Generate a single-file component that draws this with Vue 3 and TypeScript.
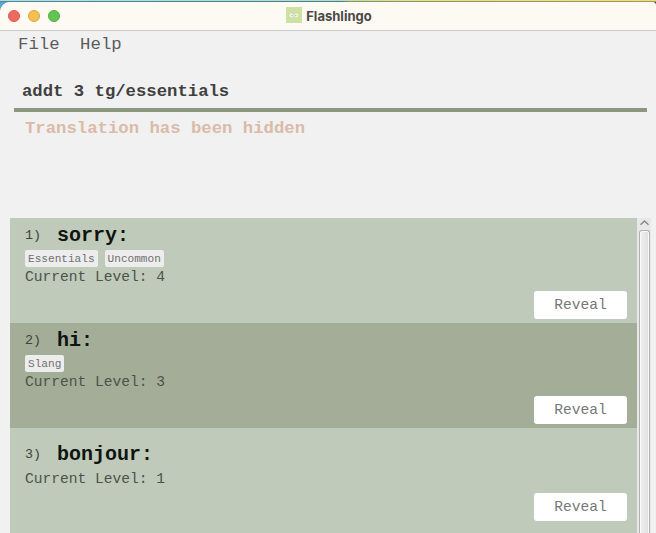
<script setup lang="ts">
interface Flashcard {
  index: number
  word: string
  tags: string[]
  level: number
}

const menus: string[] = ['File', 'Help']
const cards: Flashcard[] = [
  { index: 1, word: 'sorry', tags: ['Essentials', 'Uncommon'], level: 4 },
  { index: 2, word: 'hi', tags: ['Slang'], level: 3 },
  { index: 3, word: 'bonjour', tags: [], level: 1 },
]
</script>

<template>
  <div class="desktop">
    <div class="window">
      <header class="titlebar">
        <div class="lights">
          <span class="light close"></span>
          <span class="light minimise"></span>
          <span class="light maximise"></span>
        </div>
        <div class="title">
          <svg class="logo" width="16" height="16" viewBox="0 0 16 16">
            <rect width="16" height="16" fill="#cbe2a3" />
            <ellipse cx="5.5" cy="8.4" rx="2" ry="1.9" fill="#f3f1ee" />
            <ellipse cx="10.3" cy="8.4" rx="2" ry="1.9" fill="#f3f1ee" />
            <circle cx="6.1" cy="8.5" r="0.7" fill="#b9adb5" />
            <circle cx="9.8" cy="8.5" r="0.7" fill="#b9adb5" />
          </svg>
          <span>Flashlingo</span>
        </div>
      </header>

      <nav class="menubar">
        <span v-for="menu in menus" :key="menu">{{ menu }}</span>
      </nav>

      <div class="command">addt 3 tg/essentials</div>
      <div class="result">Translation has been hidden</div>

      <div class="list">
        <div class="cards">
          <article v-for="card in cards" :key="card.index" class="card" :class="{ untagged: !card.tags.length }">
            <div class="heading">
              <span class="index">{{ card.index }})</span>
              <span class="word">{{ card.word }}:</span>
            </div>
            <div v-if="card.tags.length" class="tags">
              <span v-for="tag in card.tags" :key="tag" class="tag">{{ tag }}</span>
            </div>
            <div class="level">Current Level: {{ card.level }}</div>
            <button class="reveal" type="button">Reveal</button>
          </article>
        </div>
        <div class="scrollbar">
          <svg class="arrow" width="13" height="12" viewBox="0 0 13 12">
            <path d="M2.5 6.8 L6.5 3 L10.5 6.8" fill="none" stroke="#858585" stroke-width="1.3" />
          </svg>
          <div class="thumb"></div>
        </div>
      </div>
    </div>
  </div>
</template>

<style>
body {
  margin: 0;
  overflow: hidden;
}
</style>

<style scoped>
.desktop {
  box-sizing: border-box;
  width: 656px;
  height: 533px;
  overflow: hidden;
  padding-top: 2px;
  background:
    linear-gradient(90deg, #b9dcd0 0, #b9dcb8 340px, #dfe0a0 420px, #e6dd94 100%) 0 0 / 100% 1px no-repeat,
    linear-gradient(90deg, #4a86ac 0, #47809c 340px, #8d9558 350px, #ab9a4b 100%) 0 1px / 100% 1px no-repeat,
    linear-gradient(90deg, #5ba4cf 0, #5ba4cf 50%, #444 50%);
}
.window {
  display: flex;
  flex-direction: column;
  height: 531px;
  border-radius: 10px 4px 0 0;
  overflow: hidden;
  background: #f1f1f1;
  font-family: "Liberation Mono", "Courier New", monospace;
}
.titlebar {
  flex: none;
  box-sizing: border-box;
  height: 29px;
  display: grid;
  grid-template-columns: 1fr auto 1fr;
  align-items: center;
  padding: 0 6px 1px 8px;
  background: #fdf9f3;
  border-bottom: 1px solid #cbcbc8;
}
.lights {
  display: flex;
  gap: 8px;
}
.light {
  box-sizing: border-box;
  width: 12px;
  height: 12px;
  border-radius: 50%;
}
.close {
  background: #ed6b60;
  border: 1px solid #d9574e;
}
.minimise {
  background: #f5bf4f;
  border: 1px solid #dda63e;
}
.maximise {
  background: #61c554;
  border: 1px solid #50ac41;
}
.title {
  display: flex;
  align-items: center;
  gap: 4px;
  font: bold 13px/16px Inter, sans-serif;
  letter-spacing: 0.02px;
  color: #4a4846;
}
.logo {
  display: block;
  margin: -1px 0 1px;
}
.menubar {
  flex: none;
  display: flex;
  gap: 20.5px;
  height: 40px;
  padding: 4px 0 0 18px;
  box-sizing: border-box;
  font-size: 17.33px;
  line-height: 20px;
  color: #5c5c5c;
}
.command {
  flex: none;
  box-sizing: border-box;
  height: 41px;
  margin: 0 9px 0 14px;
  padding: 11px 8px 0;
  border-bottom: 4px solid #8b987d;
  font-size: 17.28px;
  font-weight: bold;
  line-height: 20px;
  color: #404040;
}
.result {
  flex: none;
  box-sizing: border-box;
  height: 106px;
  padding: 7px 25px 0;
  font-size: 17.3px;
  font-weight: bold;
  line-height: 20px;
  color: #d9bba8;
}
.list {
  flex: 1;
  display: flex;
  margin: 0 5px 0 10px;
}
.cards {
  flex: 1;
}
.card {
  box-sizing: border-box;
  height: 105px;
  display: flex;
  flex-direction: column;
  padding: 5px 10px 4px 15px;
  background: #bfcaba;
}
.card:nth-child(even) {
  background: #a4ad98;
}
.card.untagged {
  padding-top: 14px;
  padding-bottom: 12px;
}
.heading {
  display: flex;
  height: 27px;
}
.index {
  width: 32px;
  font-size: 13.33px;
  line-height: 26px;
  color: #3c443b;
}
.word {
  font-size: 20px;
  line-height: 25px;
  font-weight: bold;
  color: #101410;
}
.tags {
  display: flex;
  gap: 7px;
  height: 17px;
}
.tag {
  padding: 0 3px;
  border-radius: 2px;
  background: #ededed;
  font-size: 11.1px;
  line-height: 18px;
  color: #707070;
}
.level {
  padding-top: 1px;
  font-size: 14.6px;
  line-height: 19px;
  color: #4b534a;
}
.reveal {
  align-self: flex-end;
  width: 93px;
  height: 28px;
  margin: auto 0 0;
  padding: 0;
  border: 0;
  border-radius: 3px;
  background: #fff;
  font-family: inherit;
  font-size: 14.6px;
  line-height: 28px;
  color: #777;
}
.scrollbar {
  width: 14px;
  display: flex;
  flex-direction: column;
  background: #e8e8e8;
}
.arrow {
  display: block;
  margin-left: 1px;
}
.thumb {
  flex: 1;
  margin: 0 1px 0 2px;
  border: 1px solid #b0b0b0;
  border-bottom: 0;
  border-radius: 3px 3px 0 0;
  box-shadow: inset 1px 1px #fafafa, inset -1px 0 #fafafa;
  background: linear-gradient(90deg, #f1f1f1, #dedede);
}
</style>
